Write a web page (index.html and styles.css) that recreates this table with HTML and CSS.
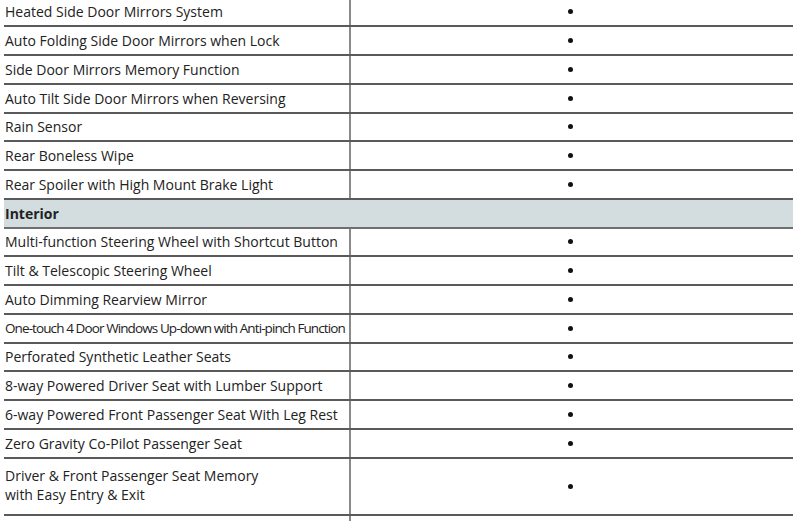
FILE: index.html
```html
<!DOCTYPE html>
<html>
<head>
<meta charset="utf-8">
<link rel="stylesheet" href="styles.css">
</head>
<body>
<div class="spec">
  <div class="row"><div class="label">Heated Side Door Mirrors System</div><div class="val"><span class="dot"></span></div></div>
  <div class="row"><div class="label">Auto Folding Side Door Mirrors when Lock</div><div class="val"><span class="dot"></span></div></div>
  <div class="row"><div class="label">Side Door Mirrors Memory Function</div><div class="val"><span class="dot"></span></div></div>
  <div class="row"><div class="label">Auto Tilt Side Door Mirrors when Reversing</div><div class="val"><span class="dot"></span></div></div>
  <div class="row"><div class="label">Rain Sensor</div><div class="val"><span class="dot"></span></div></div>
  <div class="row"><div class="label">Rear Boneless Wipe</div><div class="val"><span class="dot"></span></div></div>
  <div class="row"><div class="label">Rear Spoiler with High Mount Brake Light</div><div class="val"><span class="dot"></span></div></div>
  <div class="row section"><div class="label">Interior</div></div>
  <div class="row"><div class="label">Multi-function Steering Wheel with Shortcut Button</div><div class="val"><span class="dot"></span></div></div>
  <div class="row"><div class="label">Tilt &amp; Telescopic Steering Wheel</div><div class="val"><span class="dot"></span></div></div>
  <div class="row"><div class="label">Auto Dimming Rearview Mirror</div><div class="val"><span class="dot"></span></div></div>
  <div class="row"><div class="label condensed">One-touch 4 Door Windows Up-down with Anti-pinch Function</div><div class="val"><span class="dot"></span></div></div>
  <div class="row"><div class="label">Perforated Synthetic Leather Seats</div><div class="val"><span class="dot"></span></div></div>
  <div class="row"><div class="label">8-way Powered Driver Seat with Lumber Support</div><div class="val"><span class="dot"></span></div></div>
  <div class="row"><div class="label">6-way Powered Front Passenger Seat With Leg Rest</div><div class="val"><span class="dot"></span></div></div>
  <div class="row"><div class="label">Zero Gravity Co-Pilot Passenger Seat</div><div class="val"><span class="dot"></span></div></div>
  <div class="row tall"><div class="label">Driver &amp; Front Passenger Seat Memory<br>with Easy Entry &amp; Exit</div><div class="val"><span class="dot"></span></div></div>
  <div class="row"><div class="label"></div><div class="val"></div></div>
</div>
</body>
</html>
```
FILE: styles.css
```css
html, body {
  margin: 0;
  padding: 0;
  background: #ffffff;
  overflow: hidden;
}
body {
  font-family: "Open Sans", "Noto Sans", sans-serif;
  font-size: 14px;
  color: #222;
}
.spec {
  margin: -1.5px 0 0 4px;
  width: 789px;
}
.row {
  display: flex;
  height: 28.75px;
  box-sizing: border-box;
  border-bottom: 2px solid #5a5a5a;
}
.label {
  width: 347px;
  box-sizing: border-box;
  border-right: 2px solid #8a8a8a;
  padding-left: 1px;
  display: flex;
  align-items: center;
  white-space: nowrap;
}
.val {
  flex: 1;
  display: flex;
  align-items: center;
  justify-content: center;
  padding-right: 3px;
}
.dot {
  width: 5px;
  height: 5px;
  border-radius: 50%;
  background: #111;
}
.section {
  background: #d3dde0;
  border-bottom-color: #6e6e6e;
}
.section .label {
  border-right: none;
  font-weight: 700;
}
.condensed {
  font-size: 13.5px;
  letter-spacing: -0.9px;
}
.tall {
  height: 57.5px;
}
.tall .label {
  line-height: 19px;
  padding-bottom: 2px;
}
```
